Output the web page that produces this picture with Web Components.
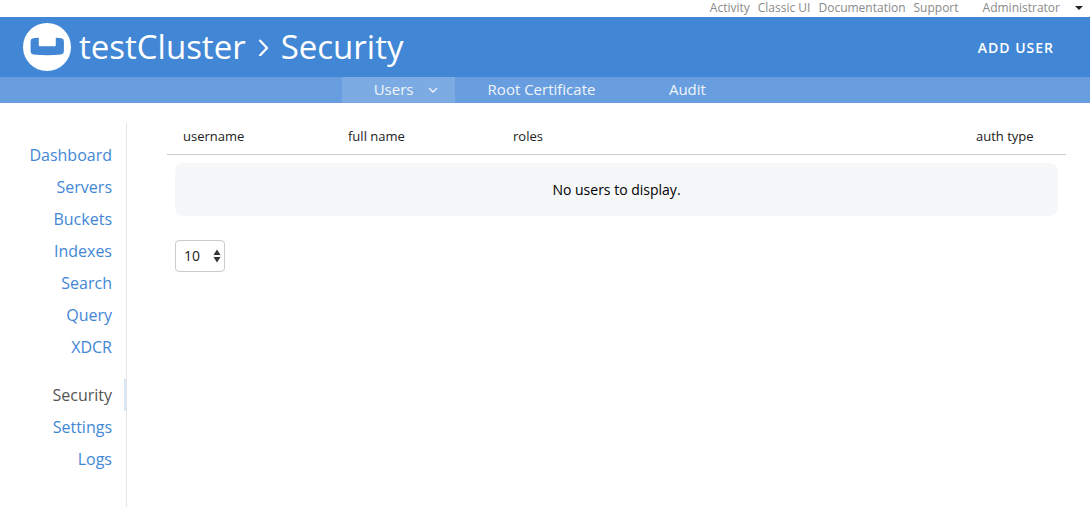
<!DOCTYPE html>
<html lang="en">
<head>
<meta charset="utf-8">
<meta name="viewport" content="width=device-width, initial-scale=1">
<title>testCluster - Security</title>
<style>
  body {
    margin: 0;
    background: #fff;
    color: #222;
    font-family: "Open Sans", "Noto Sans", sans-serif;
    --blue: #4287d6;
    --blue-mid: #689edf;
    --blue-light: #7cabe4;
  }
</style>
</head>
<body>
<cluster-app></cluster-app>

<script>
const define = (name, markup) => {
  const template = document.createElement('template');
  template.innerHTML = markup;
  customElements.define(name, class extends HTMLElement {
    constructor() {
      super();
      this.attachShadow({ mode: 'open' }).append(template.content.cloneNode(true));
    }
  });
};

define('utility-bar', `
  <style>
    :host { display: block; }
    nav { display: flex; justify-content: flex-end; align-items: flex-start; gap: 8px; height: 17px; padding-right: 7px; font-size: 12px; line-height: 16px; color: #8a8a8a; }
    a { color: inherit; text-decoration: none; }
    button { display: flex; align-items: center; gap: 15px; margin-left: 16px; padding: 0; border: 0; background: none; font: inherit; color: inherit; }
    svg { display: block; }
  </style>
  <nav aria-label="Utilities">
    <a href="#activity">Activity</a>
    <a href="#classic">Classic UI</a>
    <a href="#docs">Documentation</a>
    <a href="#support">Support</a>
    <button type="button">Administrator
      <svg width="8" height="4" viewBox="0 0 8 4" aria-hidden="true"><path d="M0 0h8L4 4z" fill="#222"/></svg>
    </button>
  </nav>`);

define('brand-logo', `
  <style>:host { display: block; } svg { display: block; }</style>
  <svg width="48" height="48" viewBox="0 0 48 48" role="img" aria-label="Logo">
    <circle cx="24" cy="24" r="24" fill="#fff"/>
    <path d="M10 15.300q3-.7 5.800-.6v7.700q0 .8.900.8h15.200q.9 0 .9-.8v-7.700q2.800-.1 5.700.6 2.400.5 2.400 3v9.800q0 3-2.900 3.500-13.700 1.300-27.700 0-2.700-.5-2.700-3.500v-9.800q0-2.400 2.400-3z" fill="#4287d6"/>
  </svg>`);

define('page-header', `
  <style>
    :host { display: block; background: var(--blue); color: #fff; }
    header { display: flex; align-items: center; height: 60px; padding: 0 36px 0 23px; }
    h1 { display: flex; align-items: center; gap: 12px; margin: 0 auto 0 8px; font-size: 33px; font-weight: 400; line-height: 42px; }
    button { padding: 2px 0 0; border: 0; background: none; color: inherit; font: 600 14px/20px "Open Sans", "Noto Sans", sans-serif; letter-spacing: 1px; }
  </style>
  <header>
    <brand-logo></brand-logo>
    <h1><span>testCluster</span>
      <svg width="11" height="18" viewBox="0 0 11 18" fill="none" stroke="#fff" stroke-width="2.200" aria-hidden="true"><path d="M1.500 2l7.500 8-7.500 8"/></svg>
      <span>Security</span></h1>
    <button type="button">ADD USER</button>
  </header>`);

define('tab-link', `
  <style>
    :host { display: block; }
    a { display: flex; align-items: flex-start; justify-content: center; gap: 15px; box-sizing: border-box; min-width: 118px; height: 26px; padding: 0 33px; color: #fff; opacity: .9; text-decoration: none; font-size: 15px; line-height: 24px; }
    :host([menu]) a { min-width: 113px; padding: 0 16px 0 32px; }
    :host([menu]) { background: var(--blue-light); }
    svg { display: none; margin-top: 10px; }
    :host([menu]) svg { display: block; }
  </style>
  <a href="#tab"><slot></slot><svg width="10" height="6" viewBox="0 0 10 6" fill="none" stroke="#fff" stroke-width="1.300" aria-hidden="true"><path d="M1 1l4 4 4-4"/></svg></a>`);

define('tab-bar', `
  <style>
    :host { display: block; background: var(--blue-mid); }
    nav { display: flex; justify-content: center; padding-right: 2px; }
  </style>
  <nav aria-label="Security sections"><slot></slot></nav>`);

define('side-link', `
  <style>
    :host { display: block; }
    a { display: block; padding-right: 12px; border-right: 2px solid transparent; color: var(--blue); text-decoration: none; font-size: 16px; line-height: 32px; text-align: right; }
    :host([current]) a { color: #555; border-color: #d9e6f7; }
  </style>
  <a href="#page"><slot></slot></a>`);

define('side-nav', `
  <style>
    :host { display: block; box-sizing: border-box; width: 127px; flex: none; padding: 16px 0 32px; border-right: 1px solid #e6e6e6; }
    nav { display: grid; gap: 16px; }
  </style>
  <nav aria-label="Main">
    <div>
      <side-link>Dashboard</side-link><side-link>Servers</side-link><side-link>Buckets</side-link>
      <side-link>Indexes</side-link><side-link>Search</side-link><side-link>Query</side-link><side-link>XDCR</side-link>
    </div>
    <div>
      <side-link current>Security</side-link><side-link>Settings</side-link><side-link>Logs</side-link>
    </div>
  </nav>`);

define('user-table', `
  <style>
    :host { display: block; }
    table { width: 100%; border-collapse: collapse; table-layout: fixed; }
    th { box-sizing: border-box; height: 31px; padding: 3px 16px 0; border-bottom: 1px solid #ccc; font-size: 13px; font-weight: 400; line-height: 20px; text-align: left; vertical-align: top; }
    .name { width: 165px; }
    .auth { width: 106px; }
    td { padding: 8px; }
    .empty { padding: 16px; border-radius: 8px; background: #f5f7f9; color: #000; font-size: 14px; line-height: 21px; text-align: center; }
  </style>
  <table>
    <thead><tr>
      <th class="name" scope="col">username</th>
      <th class="name" scope="col">full name</th>
      <th scope="col">roles</th>
      <th class="auth" scope="col">auth type</th>
    </tr></thead>
    <tbody><tr><td colspan="4"><div class="empty">No users to display.</div></td></tr></tbody>
  </table>`);

define('page-size', `
  <style>
    :host { display: block; padding: 16px 8px; }
    label { display: inline-grid; align-items: center; }
    select, svg { grid-area: 1 / 1; }
    select { appearance: none; box-sizing: border-box; width: 50px; height: 32px; margin: 0; padding: 0 8px; border: 1px solid #ccc; border-radius: 4px; background: #fff; color: #222; font: 14px/20px "Open Sans", "Noto Sans", sans-serif; }
    svg { justify-self: end; margin-right: 4px; pointer-events: none; }
  </style>
  <label>
    <select aria-label="Users per page"><option>10</option><option>20</option><option>50</option></select>
    <svg width="8" height="14" viewBox="0 0 8 14" fill="#333" aria-hidden="true"><path d="M4 .5L7.500 6h-7zM4 13.500L.5 8h7z"/></svg>
  </label>`);

define('cluster-app', `
  <style>
    :host { display: block; }
    .body { display: flex; padding: 20px 24px 13px 0; }
    main { flex: 1; min-width: 0; margin-left: 40px; }
  </style>
  <utility-bar></utility-bar>
  <page-header></page-header>
  <tab-bar>
    <tab-link menu>Users</tab-link>
    <tab-link>Root Certificate</tab-link>
    <tab-link>Audit</tab-link>
  </tab-bar>
  <div class="body">
    <side-nav></side-nav>
    <main>
      <user-table></user-table>
      <page-size></page-size>
    </main>
  </div>`);
</script>
</body>
</html>
